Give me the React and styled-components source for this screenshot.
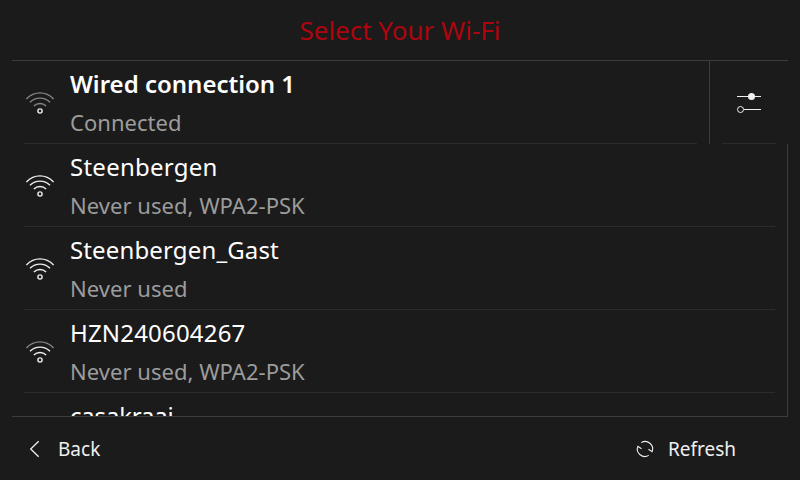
import React from "react";
import styled, { createGlobalStyle } from "styled-components";

const GlobalStyle = createGlobalStyle`
  * { box-sizing: border-box; }
  body { margin: 0; background: #1b1b1b; font-family: "Noto Sans", sans-serif; }
`;

const Screen = styled.div`
  display: flex;
  flex-direction: column;
  width: 800px;
  height: 480px;
  overflow: hidden;
  padding: 0 12px;
  background: #1b1b1b;
`;

const Header = styled.header`
  flex: 0 0 61px;
  display: flex;
  align-items: center;
  justify-content: center;
  border-bottom: 1px solid #3c3c3c;
`;

const Title = styled.h1`
  margin: 0;
  font-size: 26px;
  line-height: 36px;
  font-weight: 400;
  color: #ad050f;
  white-space: nowrap;
`;

const Current = styled.section`
  flex: 0 0 83px;
  display: flex;
`;

const Networks = styled.section`
  flex: 0 0 273px;
  overflow: hidden;
  border-right: 1px solid #3c3c3c;
  border-bottom: 1px solid #3c3c3c;
`;

const Row = styled.div`
  display: flex;
  align-items: center;
  flex: ${(p) => (p.$grow ? 1 : "none")};
  height: 83px;
  margin: 0 12px;
  border-bottom: 1px solid #2b2b2b;
`;

const IconBox = styled.div`
  flex: 0 0 46px;
  height: 82px;
`;

const Texts = styled.div`
  display: flex;
  flex-direction: column;
  height: 82px;
  padding-top: 5px;
`;

const Ssid = styled.div`
  font-size: 24px;
  line-height: 36px;
  font-weight: ${(p) => (p.$active ? 600 : 400)};
  letter-spacing: ${(p) => p.$tracking || 0}px;
  color: #fff;
  white-space: nowrap;
`;

const Status = styled.div`
  margin-top: 3px;
  font-size: 22px;
  line-height: 34px;
  letter-spacing: 0.03px;
  color: #9c9c9c;
  white-space: nowrap;
`;

const SettingsCell = styled.button`
  flex: 0 0 79px;
  height: 83px;
  padding: 0 12px;
  background: none;
  border: 0;
  border-left: 1px solid #3c3c3c;
`;

const SettingsInner = styled.span`
  display: block;
  width: 54px;
  height: 83px;
  border-bottom: 1px solid #2b2b2b;
`;

const Footer = styled.footer`
  display: flex;
  justify-content: space-between;
  height: 63px;
  padding: 17px 52px 0 12px;
`;

const Action = styled.button`
  display: flex;
  align-items: flex-start;
  gap: 12px;
  padding: 0;
  height: 32px;
  border: 0;
  background: none;
  color: #efefef;
  font: 400 19px/30px "Noto Sans", sans-serif;
`;

const Glyph = styled.svg`
  display: block;
  flex: none;
`;

function Wifi({ level }) {
  const tone = (n) => (level >= n ? "#efefef" : "#858585");
  return (
    <Glyph width="32" height="82" viewBox="0 0 32 82" fill="none" strokeWidth="1.4">
      <path d="M2.4 37.9C10.2 29.9 21.8 29.9 29.6 37.9" stroke={tone(3)} />
      <path d="M6 41.3C11.5 35.7 20.5 35.7 26 41.3" stroke={tone(2)} />
      <path d="M9.9 44.9C13.2 41.6 18.8 41.6 22.1 44.9" stroke={tone(1)} />
      <circle cx="16" cy="50" r="2.1" stroke="#efefef" strokeWidth="1.4" />
    </Glyph>
  );
}

function Sliders() {
  return (
    <Glyph width="54" height="82" viewBox="0 0 54 82" fill="none">
      <path d="M15 35.5H39M22 48.5H39" stroke="#efefef" />
      <circle cx="29.5" cy="35.5" r="3.5" fill="#efefef" />
      <circle cx="18.5" cy="48.5" r="3" stroke="#efefef" />
    </Glyph>
  );
}

function BackIcon() {
  return (
    <Glyph width="22" height="32" viewBox="0 0 22 32" fill="none">
      <path d="M14.7 7.2L6.7 15L14.7 22.8" stroke="#efefef" strokeWidth="1.3" />
    </Glyph>
  );
}

function RefreshIcon() {
  return (
    <Glyph width="22" height="32" viewBox="0 0 22 32" fill="none">
      <path
        d="M7.2 8.6A7.5 7.5 0 0 1 18.1 17.7L14.5 15.2M14.8 21.4A7.5 7.5 0 0 1 3.9 12.3L7.5 14.8"
        stroke="#efefef"
        strokeWidth="1.1"
      />
    </Glyph>
  );
}

function Network({ name, status, level, active, tracking }) {
  return (
    <Row $grow={active}>
      <IconBox>{level !== undefined && <Wifi level={level} />}</IconBox>
      <Texts>
        <Ssid $active={active} $tracking={tracking}>{name}</Ssid>
        {status && <Status>{status}</Status>}
      </Texts>
    </Row>
  );
}

const networks = [
  { name: "Steenbergen", status: "Never used, WPA2-PSK", level: 3, tracking: 0.25 },
  { name: "Steenbergen_Gast", status: "Never used", level: 3, tracking: 0.14 },
  { name: "HZN240604267", status: "Never used, WPA2-PSK", level: 2, tracking: 0.18 },
  { name: "casakraai", tracking: -0.2 },
];

export default function App() {
  return (
    <Screen>
      <GlobalStyle />
      <Header><Title>Select Your Wi-Fi</Title></Header>
      <Current>
        <Network name="Wired connection 1" status="Connected" level={0} active />
        <SettingsCell aria-label="Network settings">
          <SettingsInner><Sliders /></SettingsInner>
        </SettingsCell>
      </Current>
      <Networks>
        {networks.map((n) => <Network key={n.name} {...n} />)}
      </Networks>
      <Footer>
        <Action><BackIcon />Back</Action>
        <Action><RefreshIcon />Refresh</Action>
      </Footer>
    </Screen>
  );
}
